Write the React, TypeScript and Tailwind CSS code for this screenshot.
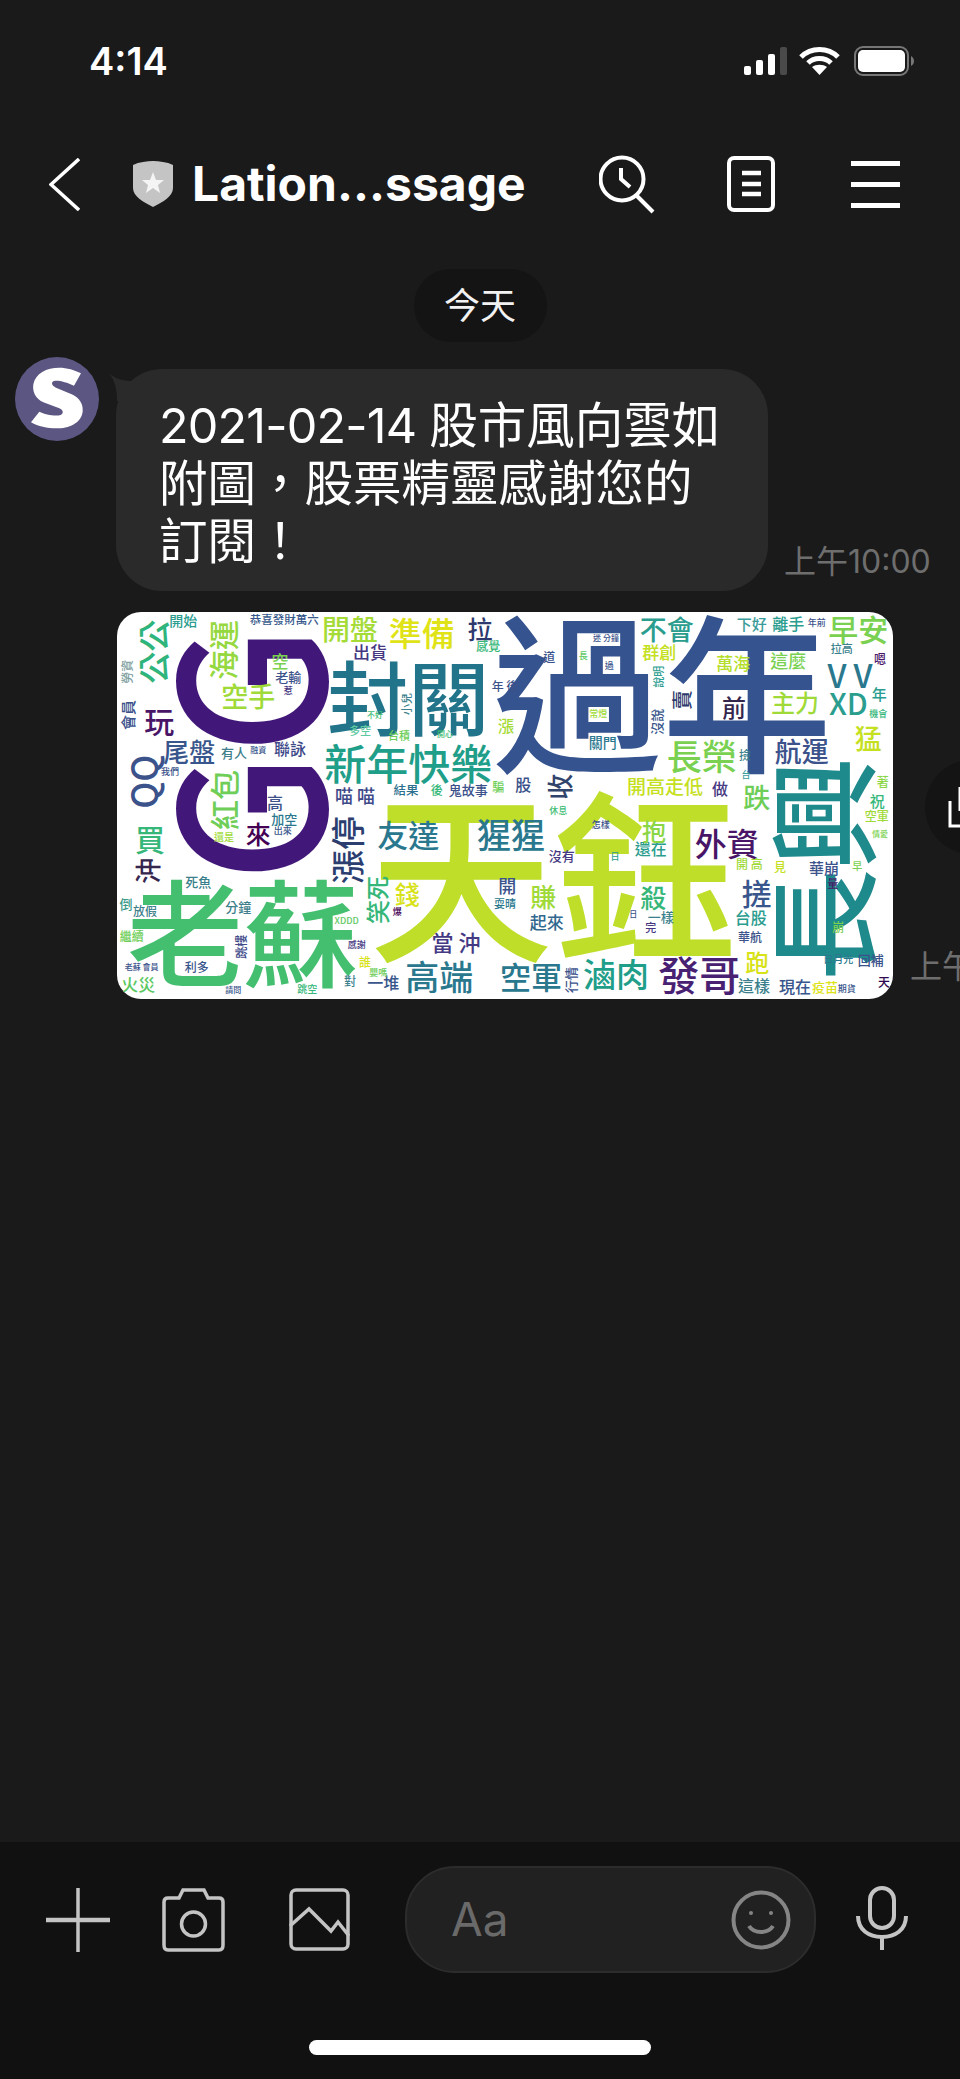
type Word = [string, number, number, number, string, number?];

const cjk = "font-['Inter','Noto_Sans_CJK_TC',sans-serif]";

// word cloud positions, measured from the left and right half of the picture
const leftWords: Word[] = [
  ['開始', 250, 60, 14, '#2a9d8f'],
  ['恭喜發財萬六', 553, 58, 11.5, '#38598c'],
  ['開盤', 750, 85, 28, '#a5db36'],
  ['準備', 965, 95, 33, '#dfe318'],
  ['拉', 1140, 85, 25, '#2e3a6e'],
  ['出貨', 810, 155, 17, '#453781'],
  ['感覺', 1165, 135, 12, '#35b779'],
  ['封關', 925, 280, 81, '#21748a'],
  ['新年快樂', 925, 485, 42, '#1f9e89'],
  ['玩', 178, 360, 30, '#481567'],
  ['尾盤', 268, 450, 26, '#39568c'],
  ['有人', 402, 458, 13, '#3f7f8c'],
  ['融資', 475, 448, 8, '#39568c'],
  ['聯詠', 570, 445, 16, '#3e4a89'],
  ['空手', 445, 285, 27, '#a0da39'],
  ['老輸', 565, 230, 13, '#3b528b'],
  ['空', 540, 182, 17, '#7ad151'],
  ['惹', 565, 272, 9, '#453781'],
  ['海運', 365, 150, 30, '#95d840', 1],
  ['公公', 155, 155, 32, '#2fb47c', 1],
  ['會員', 82, 345, 15, '#3b528b', 1],
  ['勞資', 80, 215, 12, '#7f9f9f', 1],
  ['QQ', 125, 545, 36, '#3b528b', 1],
  ['紅包', 370, 600, 30, '#6ece58', 1],
  ['我們', 210, 515, 9, '#3b528b'],
  ['買', 150, 715, 30, '#35b779'],
  ['沖', 140, 812, 26, '#35264e', 1],
  ['來', 475, 700, 25, '#440154'],
  ['高', 525, 607, 16, '#3b528b'],
  ['加空', 553, 655, 13, '#2a788e'],
  ['出來', 548, 692, 9, '#39568c'],
  ['還是', 372, 710, 10, '#a0da39'],
  ['喵 喵', 765, 585, 18, '#3f4a8a'],
  ['結果', 918, 567, 12.5, '#2a6f8e'],
  ['後', 1010, 567, 12, '#35b779'],
  ['鬼故事', 1105, 567, 13, '#3b528b'],
  ['騙', 1195, 560, 12, '#6ece58'],
  ['漲停', 740, 750, 34, '#2c3e70', 1],
  ['友達', 925, 700, 31, '#2a788e'],
  ['猩猩', 1233, 700, 34, '#2a788e'],
  ['死魚', 295, 845, 13, '#3b7f8c'],
  ['分鐘', 415, 920, 13, '#3f7f8c'],
  ['放假', 135, 932, 12, '#3f7f8c'],
  ['倒', 78, 910, 13, '#3a9a8a'],
  ['繼續', 95, 1005, 12, '#6ece58'],
  ['老蘇 會員', 125, 1100, 8, '#3b528b'],
  ['利多', 290, 1098, 12, '#39568c'],
  ['火災', 115, 1150, 17, '#5cc863'],
  ['跳樓', 422, 1040, 12, '#3e4a89', 1],
  ['XDDD', 740, 960, 9, '#5ec962'],
  ['笑死', 830, 900, 24, '#35b779', 1],
  ['錢', 922, 880, 25, '#d8e219'],
  ['爆', 892, 935, 9, '#440154'],
  ['開', 1222, 855, 18, '#3b528b'],
  ['當 沖', 1068, 1022, 22, '#443983'],
  ['耍晴', 1215, 908, 11, '#2a788e'],
  ['高端', 1018, 1125, 34, '#2a788e'],
  ['感謝', 770, 1033, 9, '#453781'],
  ['一堆', 850, 1145, 16, '#39568c'],
  ['對', 750, 1140, 12, '#3b7f8c'],
  ['誰', 795, 1085, 12, '#d8e219'],
  ['嬰嗎', 835, 1118, 9, '#6ece58'],
  ['跳空', 622, 1165, 10, '#35b779'],
  ['請問', 400, 1168, 8, '#39568c'],
  ['空軍', 1293, 1125, 31, '#2a788e'],
  ['漲', 1218, 375, 16, '#a5db36'],
  ['年 後', 1215, 255, 12, '#3b528b'],
  ['不好', 825, 342, 8, '#3dbc74'],
  ['小兒', 918, 312, 11, '#3b7f8c', 1],
  ['多空', 780, 390, 11, '#5ec9a0'],
  ['台積', 897, 405, 11, '#6ece58'],
  ['開心', 1035, 400, 8, '#3dbc74'],
  ['股', 1270, 552, 16, '#3b528b'],
];

const rightWords: Word[] = [
  ['滷肉', 258, 1120, 33, '#1f9e89'],
  ['發哥', 508, 1118, 41, '#482173'],
  ['跑', 682, 1085, 24, '#d8e219'],
  ['這樣', 672, 1155, 16, '#3b7f8c'],
  ['現在', 795, 1158, 16, '#39568c'],
  ['疫苗', 885, 1160, 13, '#dde318'],
  ['期貨', 950, 1165, 9, '#39568c'],
  ['天', 1062, 1145, 12, '#300a50'],
  ['日月光', 925, 1075, 10, '#2a788e'],
  ['回補', 1022, 1078, 13, '#3b528b'],
  ['台股', 662, 950, 16, '#2a9d8f'],
  ['華航', 660, 1008, 12, '#3b528b'],
  ['搓', 680, 875, 30, '#39568c'],
  ['外資', 590, 725, 32, '#481567'],
  ['殺', 370, 888, 26, '#35b779'],
  ['賺', 40, 885, 26, '#a0da39'],
  ['起來', 50, 965, 17, '#31688e'],
  ['一樣', 392, 950, 13, '#3b7f8c'],
  ['完', 362, 982, 11, '#453781'],
  ['日', 310, 940, 8, '#3b528b'],
  ['沒有', 95, 765, 13, '#453781'],
  ['休息', 85, 632, 9, '#3dbc74'],
  ['怎樣', 212, 672, 9, '#3b528b'],
  ['日', 255, 768, 9, '#2a9d8f'],
  ['還在', 362, 745, 16, '#2a9d8f'],
  ['抱', 372, 692, 24, '#8bd646'],
  ['開 高', 658, 790, 12, '#a0da39'],
  ['開高走低', 405, 557, 19, '#c5e021'],
  ['做', 570, 565, 16, '#453781'],
  ['跌', 680, 590, 27, '#6ece58'],
  ['台', 648, 522, 9, '#3b9c9c'],
  ['撿', 645, 462, 12, '#3b7f8c'],
  ['長榮', 515, 462, 35, '#7ad151'],
  ['航運', 815, 450, 27, '#3b528b'],
  ['前', 612, 318, 24, '#35264e'],
  ['主力', 795, 305, 24, '#a0da39'],
  ['萬海', 610, 188, 17, '#b5de2b'],
  ['這麼', 775, 180, 18, '#7ad151'],
  ['群創', 388, 155, 17, '#c5e021'],
  ['不會', 410, 85, 27, '#2a9d8f'],
  ['下好', 665, 70, 15, '#3b9c9c'],
  ['離手', 775, 70, 16, '#2a9d8f'],
  ['年前', 860, 68, 9, '#3b528b'],
  ['早安', 985, 85, 30, '#7ad151'],
  ['拉高', 935, 145, 11, '#3b7f8c'],
  ['嗯', 1050, 175, 12, '#481567'],
  ['V V', 960, 222, 32, '#2a788e'],
  ['XD', 955, 305, 30, '#2a9d8f'],
  ['年', 1048, 280, 15, '#2a9d8f'],
  ['機會', 1045, 340, 9, '#35b779'],
  ['猛', 1015, 412, 27, '#c5e021'],
  ['著', 1058, 545, 12, '#8bd646'],
  ['祝', 1042, 600, 15, '#35b779'],
  ['空軍', 1040, 645, 12, '#a0da39'],
  ['情愛', 1050, 700, 8, '#7ad151'],
  ['華崩', 882, 803, 15, '#3b528b'],
  ['早', 982, 797, 10, '#7ad151'],
  ['量', 908, 850, 11, '#481567'],
  ['見', 750, 800, 12, '#c5e021'],
  ['崩', 925, 980, 12, '#7ad151'],
  ['迷 分鐘', 228, 112, 8, '#3b528b'],
  ['長', 160, 165, 9, '#5ec962'],
  ['道', 58, 170, 12, '#3b528b'],
  ['過', 238, 195, 9, '#3b528b'],
  ['常燈', 205, 340, 9, '#a0da39'],
  ['關門', 218, 425, 14, '#2a788e'],
  ['說明', 385, 230, 11, '#2a9d8f', 1],
  ['沒說', 380, 365, 13, '#39568c', 1],
  ['賣', 455, 300, 20, '#2e3a6e', 1],
  ['收', 85, 560, 26, '#31446b', 1],
  ['行情', 120, 1140, 13, '#3b528b', 1],
];

// the large words, drawn first, in page pixels
const bigWords: Word[] = [
  ['過年', 662, 686, 170, '#35538f'],
  ['天鈺', 553, 868, 184, '#bede2a'],
  ['老蘇', 243, 927, 116, '#44bf70'],
  ['長興', 818, 869, 112, '#1f8a8c', 1],
];

function CloudWord({ word, x, y }: { word: Word; x: number; y: number }) {
  const [text, , , size, color, rot] = word;
  return (
    <text
      x={x}
      y={y}
      fontSize={size}
      fill={color}
      textAnchor="middle"
      dominantBaseline="central"
      transform={rot ? `rotate(-90 ${x} ${y})` : undefined}
    >
      {text}
    </text>
  );
}

function WordCloud() {
  return (
    <svg
      viewBox="117 612 776 387"
      className="w-[776px] h-[387px] shrink-0 rounded-[24px] bg-white font-medium font-['Noto_Sans_CJK_TC',sans-serif]"
    >
      <text
        x={239}
        y={754}
        fontSize={200}
        fill="#42177a"
        textAnchor="middle"
        dominantBaseline="central"
        textLength={255}
        lengthAdjust="spacingAndGlyphs"
        transform="rotate(-90 239 754)"
      >
        GG
      </text>
      {bigWords.map((w) => (
        <CloudWord key={w[0]} word={w} x={w[1]} y={w[2]} />
      ))}
      {leftWords.map((w, i) => (
        <CloudWord key={i} word={w} x={100 + w[1] / 3} y={600 + w[2] / 3} />
      ))}
      {rightWords.map((w, i) => (
        <CloudWord key={i} word={w} x={530 + w[1] / 3} y={600 + w[2] / 3} />
      ))}
    </svg>
  );
}

function StatusIcons() {
  return (
    <div className="flex items-center">
      <svg width="43" height="28" viewBox="0 0 43 28" fill="#fff">
        <rect x="0" y="19" width="7" height="9" rx="2" />
        <rect x="12" y="13" width="7" height="15" rx="2" />
        <rect x="24" y="7" width="7" height="21" rx="2" />
        <rect x="36" y="0" width="7" height="28" rx="2" fill="#4a4a4a" />
      </svg>
      <svg width="41" height="28" viewBox="0 0 41 28" className="ml-3" fill="none" stroke="#fff" strokeWidth="5">
        <path d="M2 10 C12 0 29 0 39 10" />
        <path d="M9 16 C15 10 26 10 32 16" />
        <path d="M20.500 28 L13 20 C17 17 24 17 28 20 Z" fill="#fff" stroke="none" />
      </svg>
      <svg width="60" height="30" viewBox="0 0 60 30" className="ml-[14px]" fill="none">
        <rect x="1" y="1" width="53" height="28" rx="8" stroke="#777" strokeWidth="2" />
        <rect x="4" y="4" width="47" height="22" rx="5" fill="#fff" />
        <path d="M57 10 C59 11 60 13 60 15 C60 17 59 19 57 20 Z" fill="#777" />
      </svg>
    </div>
  );
}

function Header() {
  return (
    <div className="h-[124px] flex items-center text-white">
      <svg width="31" height="53" viewBox="0 0 31 53" className="ml-[49px]" fill="none" stroke="#fff" strokeWidth="3.500">
        <path d="M30 1 L2 26.500 L30 52" />
      </svg>
      <svg width="40" height="46" viewBox="0 0 40 46" className="ml-[53px]">
        <path d="M20 0 C26 0 34 1 40 4 L40 27 C40 35 30 41 20 46 C10 41 0 35 0 27 L0 4 C6 1 14 0 20 0 Z" fill="#c4c4c4" />
        <path d="M20 11 L23 19 L31 19 L25 24 L27 32 L20 27 L13 32 L15 24 L9 19 L17 19 Z" fill="#f4f4f4" />
      </svg>
      <span className="ml-[19px] w-[340px] whitespace-nowrap text-[48px] font-bold font-['Inter',sans-serif]">
        Lation...ssage
      </span>
      <svg width="56" height="60" viewBox="0 0 56 60" className="ml-[67px]" fill="none" stroke="#fff" strokeWidth="4">
        <circle cx="23" cy="25" r="21.500" />
        <path d="M22 14 L22 25 L31 33" />
        <path d="M38 42 L54 58" />
      </svg>
      <svg width="48" height="56" viewBox="0 0 48 56" className="ml-[72px]" fill="none" stroke="#fff">
        <rect x="2" y="2" width="44" height="52" rx="5" strokeWidth="4" />
        <path d="M15 17 H34 M15 28 H34 M15 38 H34" strokeWidth="4.500" />
      </svg>
      <div className="ml-[76px] w-[49px] flex flex-col gap-[16px]">
        <div className="h-[5px] bg-white" />
        <div className="h-[5px] bg-white" />
        <div className="h-[5px] bg-white" />
      </div>
    </div>
  );
}

function Avatar() {
  return (
    <svg width="84" height="84" viewBox="45 36 252 252" className="shrink-0">
      <circle cx="171" cy="162" r="126" fill="#5b5782" />
      <path
        d="M243 85 L222 122 C200 112 175 105 162 108 C152 112 155 122 168 128 L215 148 C240 160 250 178 248 200 C244 235 205 250 170 250 C140 250 115 245 93 232 L118 200 C135 208 165 215 182 210 C192 205 190 195 178 190 L130 172 C105 160 97 140 100 118 C106 85 140 68 178 68 C200 68 225 75 243 85 Z"
        fill="#fff"
      />
    </svg>
  );
}

function Messages() {
  return (
    <div className="flex-1 relative">
      <div className="pt-[23px] flex justify-center">
        <div className={`h-[73px] w-[133px] rounded-full bg-[#141414] text-[#f2f2f2] text-[36px] flex items-center justify-center ${cjk}`}>
          今天
        </div>
      </div>

      <div className="mt-[15px] pl-[15px] flex items-start">
        <Avatar />
        <div className="ml-[17px] mt-[12px] relative w-[652px] h-[222px] rounded-[46px] bg-[#2a2a2a] pl-[43px] pt-[28px]">
          <svg width="24" height="28" viewBox="0 0 24 28" className="absolute left-[-7px] top-[4px]" fill="#2a2a2a">
            <path d="M0 0 C6 6 14 8 24 8 L24 28 L8 28 C8 16 6 8 0 0 Z" />
          </svg>
          <p className={`text-[48.500px] leading-[58px] text-white whitespace-nowrap ${cjk}`}>
            <span className="tracking-[-0.800px]">2021-02-14 </span>股市風向雲如
            <br />
            附圖，股票精靈感謝您的
            <br />
            訂閱！
          </p>
        </div>
        <span className={`ml-[16px] self-end mb-[9px] text-[32px] leading-[40px] text-[#6e6e6e] whitespace-nowrap ${cjk}`}>
          上午10:00
        </span>
      </div>

      <div className="mt-[21px] pl-[117px] flex items-end">
        <WordCloud />
        <span className={`ml-[17px] mb-[12px] text-[32px] leading-[40px] text-[#6e6e6e] whitespace-nowrap ${cjk}`}>
          上午10:00
        </span>
      </div>

      {/* share button over the image row, cut by the screen edge */}
      <div className="absolute left-[925px] top-[514px] w-[94px] h-[94px] rounded-full bg-[#141414] flex items-center">
        <svg width="35" height="44" viewBox="0 0 35 44" className="ml-[23px]" fill="none" stroke="#fff" strokeWidth="3">
          <path d="M2 16 L2 41 L33 41 L33 16" />
          <path d="M12 2 L12 26" />
        </svg>
      </div>
    </div>
  );
}

function InputBar() {
  return (
    <div className="h-[237px] bg-[#111111] relative">
      <div className="flex items-start pt-[24px]">
        <svg width="64" height="64" viewBox="0 0 64 64" className="ml-[46px] mt-[22px]" fill="none" stroke="#c4c4c4">
          <path d="M0 32 H64" strokeWidth="4.500" />
          <path d="M32 0 V64" strokeWidth="3.500" />
        </svg>
        <svg width="63" height="64" viewBox="0 0 63 64" className="ml-[52px] mt-[22px]" fill="none" stroke="#c4c4c4" strokeWidth="3.500">
          <path d="M6 10 H17 L21 2 H42 L46 10 H57 C60 10 61 12 61 14 V57 C61 60 60 62 57 62 H6 C3 62 2 60 2 57 V14 C2 12 3 10 6 10 Z" />
          <ellipse cx="31.500" cy="36" rx="12" ry="12" />
        </svg>
        <svg width="61" height="63" viewBox="0 0 61 63" className="ml-[64px] mt-[22px]" fill="none" stroke="#c4c4c4" strokeWidth="3.500">
          <rect x="2" y="2" width="57" height="59" rx="5" />
          <path d="M1 38 L20 21 L42 43 L49 34 L60 48" />
        </svg>
        <div className="ml-[55px] w-[411px] h-[107px] rounded-[50px] bg-[#212121] border-2 border-[#2c2c2c] flex items-center justify-between pl-[44px] pr-[23px]">
          <span className="text-[46px] text-[#6a6a6a] font-['Inter',sans-serif]">Aa</span>
          <svg width="60" height="60" viewBox="0 0 60 60" fill="none" stroke="#858585" strokeWidth="4">
            <circle cx="30" cy="30" r="27.500" />
            <circle cx="20" cy="23" r="2" fill="#858585" stroke="none" />
            <circle cx="40" cy="23" r="2" fill="#858585" stroke="none" />
            <path d="M18 36 C23 44 37 44 42 36" />
          </svg>
        </div>
        <svg width="52" height="64" viewBox="0 0 52 64" className="ml-[40px] mt-[20px]" fill="none" stroke="#c4c4c4" strokeWidth="4">
          <rect x="14" y="2" width="24" height="40" rx="12" />
          <path d="M2 30 C2 44 13 51 26 51 C39 51 50 44 50 30" />
          <path d="M26 51 V64" />
        </svg>
      </div>
      <div className="absolute left-[309px] top-[198px] w-[342px] h-[15px] rounded-full bg-white" />
    </div>
  );
}

export default function App() {
  return (
    <div className="relative w-[960px] h-[2079px] overflow-hidden flex flex-col bg-[#1a1a1a]">
      <div className="h-[122px] flex items-center justify-between pl-[89px] pr-[46px]">
        <span className="text-white text-[38px] font-semibold font-['Inter',sans-serif]">4:14</span>
        <StatusIcons />
      </div>
      <Header />
      <Messages />
      <InputBar />
    </div>
  );
}
